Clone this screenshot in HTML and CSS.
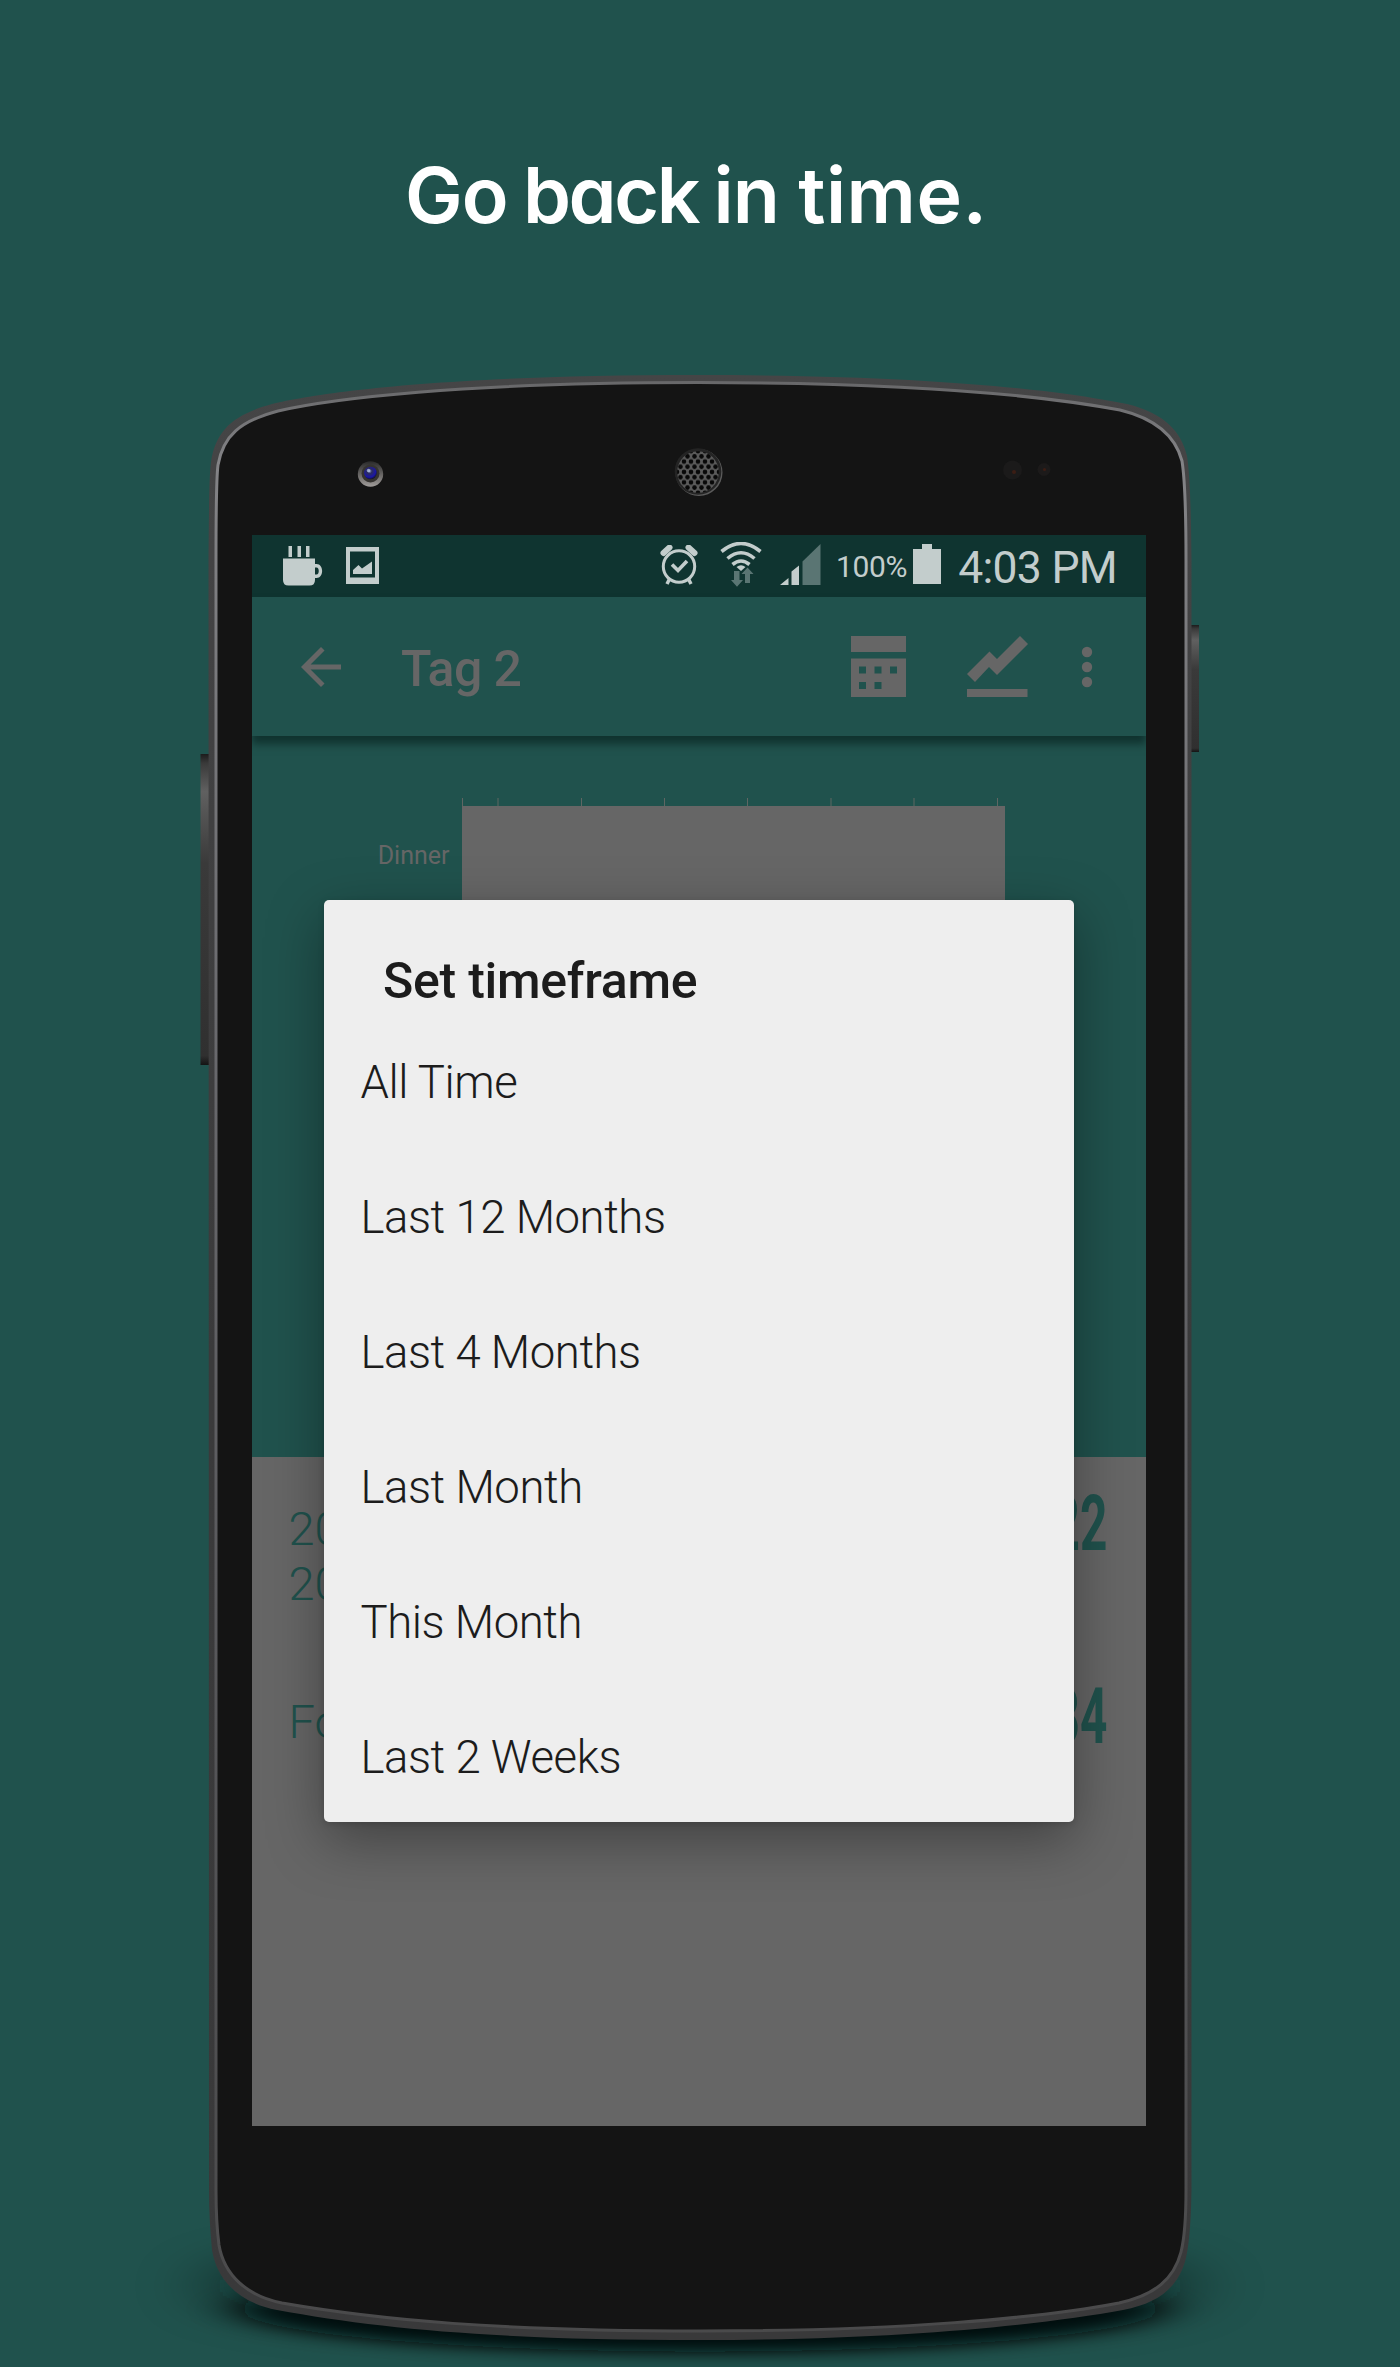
FILE: index.html
```html
<!DOCTYPE html>
<html lang="en">
<head>
<meta charset="utf-8">
<title>Go back in time.</title>
<link rel="stylesheet" href="styles.css">
</head>
<body>
<main class="promo">
  <h1 class="headline"><span>Go</span> <span class="tight">back</span> <span>in</span> <span class="wide">time.</span></h1>
  <div class="phone">
    <svg class="shell" width="1400" height="2027" viewBox="0 340 1400 2027" aria-hidden="true">
      <defs>
        <filter id="soft" x="-20%" y="-60%" width="140%" height="220%"><feGaussianBlur stdDeviation="26 8"/></filter>
        <filter id="softer" x="-20%" y="-60%" width="140%" height="220%"><feGaussianBlur stdDeviation="34 20"/></filter>
        <linearGradient id="rim" x1="0" y1="0" x2="0" y2="1"><stop offset="0" stop-color="#454546"/><stop offset=".5" stop-color="#3a3a3b"/><stop offset="1" stop-color="#39393a"/></linearGradient>
        <linearGradient id="edge" x1="0" y1="0" x2="0" y2="1"><stop offset="0" stop-color="#68686a"/><stop offset=".04" stop-color="#838386"/><stop offset=".35" stop-color="#68686c"/><stop offset=".7" stop-color="#555558"/><stop offset="1" stop-color="#4a4a4b"/></linearGradient>
        <linearGradient id="key" x1="0" y1="0" x2="0" y2="1"><stop offset="0" stop-color="#1c1c1c"/><stop offset=".03" stop-color="#3a3a3a"/><stop offset=".12" stop-color="#606060"/><stop offset=".35" stop-color="#3a3a3a"/><stop offset=".97" stop-color="#303030"/><stop offset="1" stop-color="#141414"/></linearGradient>
        <linearGradient id="ring" x1="0" y1="0" x2="0" y2="1"><stop offset="0" stop-color="#2a2a2a"/><stop offset="1" stop-color="#a09c9a"/></linearGradient>
        <radialGradient id="lens" cx=".42" cy=".35" r=".65"><stop offset="0" stop-color="#8fa0d0"/><stop offset=".3" stop-color="#2c2c60"/><stop offset=".75" stop-color="#1a16a8"/><stop offset="1" stop-color="#15152c"/></radialGradient>
        <pattern id="mesh" x="698" y="472" width="7" height="10.4" patternUnits="userSpaceOnUse"><rect width="7" height="10.400" fill="#5a5a5a"/><g fill="#080808"><circle cx="0" cy="0" r="2.300"/><circle cx="7" cy="0" r="2.300"/><circle cx="3.500" cy="5.200" r="2.300"/><circle cx="0" cy="10.400" r="2.300"/><circle cx="7" cy="10.400" r="2.300"/></g></pattern>
      </defs>
      <ellipse cx="700" cy="2286" rx="500" ry="48" fill="#04110f" opacity=".5" filter="url(#softer)"/>
      <ellipse cx="700" cy="2309" rx="460" ry="43" fill="#010707" filter="url(#soft)"/>
      <rect x="200.500" y="754" width="12" height="311" fill="url(#key)"/>
      <rect x="1188" y="625" width="11" height="127" fill="url(#key)"/>
      <path fill="url(#rim)" d="M208.500 560C209 510 209 478 211 462C216 428 236 414 272 404C318 393 440 375 698 375C940 375 1060 391 1127 404C1165 413 1182 433 1187 456C1190 475 1191 510 1191.500 560V2190C1191 2215 1190 2240 1186 2258C1179 2286 1160 2303 1123 2310C1040 2325 900 2340 700 2340C500 2340 380 2329 277 2310C240 2303 217 2281 212 2250C210 2230 209 2210 209 2190Z"/>
      <path fill="#141414" stroke="url(#edge)" stroke-width="3" d="M216 560C216 510 216 480 218 465C223 436 240 421 278 411C330 399 460 382.500 698 382.500C940 382.500 1055 398 1120 410C1157 419 1176 438 1182 461C1185 480 1186 510 1186 560V2190C1186 2215 1185 2236 1181 2252C1174 2279 1155 2295 1119 2303C1040 2318 900 2331 700 2331C500 2331 380 2320 282 2303C247 2296 224 2275 219 2245C217 2230 216 2210 216 2190Z"/>
      <circle cx="370.500" cy="474" r="12.700" fill="url(#ring)"/><circle cx="370.500" cy="473.500" r="9" fill="#353330"/><circle cx="370.500" cy="473" r="6.300" fill="url(#lens)"/><circle cx="368.500" cy="470.500" r="1.700" fill="#bac9ea" opacity=".7"/>
      <circle cx="699" cy="472.500" r="23.500" fill="#5b5b5b"/><circle cx="698" cy="471.500" r="23.300" fill="#242424"/><circle cx="698" cy="472" r="20.800" fill="url(#mesh)"/>
      <circle cx="1012.500" cy="470" r="9.500" fill="#1b1a1a"/><circle cx="1014" cy="472" r="2" fill="#3b1d14"/>
      <circle cx="1044" cy="469.500" r="6.500" fill="#1c1a1a"/><circle cx="1044.500" cy="469.500" r="1.600" fill="#3b1d14"/>
    </svg>
    <section class="screen">
      <header class="statusbar">
        <svg class="i-cup" width="40" height="40" viewBox="0 0 40 40" fill="currentColor"><path d="M5.500 0h3.500v11H5.500zM14.500 0H18v11h-3.500zM23 0h3.500v11H23z"/><path fill-rule="evenodd" d="M0 12.500h32V18h1.500c7.500 0 7.500 14 0 14H32v2q0 5.500-5.500 5.500h-21Q0 39.500 0 34zM32 21.500v7h1.500c3 0 3-7 0-7z"/></svg>
        <svg class="i-pic" width="33" height="37" viewBox="0 0 33 37" fill="currentColor"><path fill-rule="evenodd" d="M0 0h33v37H0zM4 4.500v26h25v-26z"/><path d="M7 27v-4l5.500-5 3.500 3.500L26 14.500V27z"/></svg>
        <svg class="i-alarm" width="38" height="40" viewBox="0 0 38 40" fill="none" stroke="currentColor"><circle cx="19" cy="21.500" r="15.700" stroke-width="3"/><path d="M12 19.500l6 6 9-9.500" stroke-width="3.600"/><path d="M3.500 8l6-5.500M34.500 8l-6-5.500" stroke-width="6" stroke-linecap="round"/><path d="M9.500 34l-2.500 5M28.500 34l2.500 5" stroke-width="3.500"/></svg>
        <svg class="i-wifi" width="42" height="45" viewBox="0 0 42 45" fill="none"><path d="M1.500 9.500Q21-6.500 40.500 9.500M7.500 16.500Q21 5 34.500 16.500M12.500 22.500Q21 15.500 29.500 22.500" stroke="currentColor" stroke-width="3.600"/><path d="M16.500 25q4.500-3.500 9 0L21 29z" fill="currentColor"/><path class="dim" d="M14 29h5.500v9h3.500l-6 6.800-6-6.800h3zM25 41v-9h-3.500l6-6.500 6 6.500h-3.500v9z"/></svg>
        <svg class="i-signal" width="41" height="41" viewBox="0 0 41 41" fill="currentColor"><path d="M0 41l8.500-7v7zM11.500 41V27.500l7.500-6V41z"/><path class="dim" d="M22.500 41V17.500L40.500 0V41z"/></svg>
        <span class="percent">100%</span>
        <svg class="i-batt" width="28" height="40" viewBox="0 0 28 40" fill="currentColor"><path d="M9 0h10v5h9v35H0V5h9z"/></svg>
        <span class="clock">4:03 PM</span>
      </header>
      <nav class="toolbar">
        <svg class="i-back" width="40" height="40" viewBox="4 4 16 16" fill="currentColor"><path d="M20 11H7.830l5.590-5.590L12 4l-8 8 8 8 1.410-1.410L7.830 13H20v-2z"/></svg>
        <span class="screen-title">Tag 2</span>
        <svg class="i-cal" width="55" height="61" viewBox="0 0 55 61" fill="currentColor"><path fill-rule="evenodd" d="M0 0h55v16H0zM0 22.500h55V61H0zM8 30.500v7h7v-7zM23.500 30.500v7h7v-7zM39 30.500v7h7v-7zM8 46v7h7v-7zM23.500 46v7h7v-7z"/></svg>
        <svg class="i-line" width="61" height="61" viewBox="0 0 61 61" fill="currentColor"><path d="M0 38L22.500 15.500 30 23 53 0l8 8-31 31-8-8L8 46zM0 53h60.500v8H0z"/></svg>
        <svg class="i-more" width="12" height="42" viewBox="0 0 12 42" fill="currentColor"><circle cx="6" cy="6" r="5.200"/><circle cx="6" cy="21" r="5.200"/><circle cx="6" cy="36" r="5.200"/></svg>
      </nav>
      <section class="chart">
        <span class="meal">Dinner</span>
        <div class="plot">
          <svg width="543" height="8" viewBox="0 0 543 8" stroke="#5f6663" stroke-width="1"><path d="M.5 0v8M36 0v8M119.500 0v8M202.500 0v8M285.500 0v8M369 0v8M452 0v8M535.500 0v8"/></svg>
          <div class="grid"></div>
        </div>
      </section>
      <section class="stats">
        <div class="stat"><p>20<br>20</p><b>22</b></div>
        <div class="stat"><p>Fo</p><b>34</b></div>
      </section>
      <div class="dialog" role="dialog">
        <h2>Set timeframe</h2>
        <ul>
          <li>All Time</li>
          <li>Last 12 Months</li>
          <li>Last 4 Months</li>
          <li>Last Month</li>
          <li>This Month</li>
          <li>Last 2 Weeks</li>
        </ul>
      </div>
    </section>
  </div>
</main>
</body>
</html>
```
FILE: styles.css
```css
* { box-sizing: border-box; margin: 0; padding: 0; }
body { background: #20524d; font-family: Roboto, "Liberation Sans", sans-serif; }
svg { display: block; flex: none; }
.promo { width: 1400px; height: 2367px; overflow: hidden; display: flex; flex-direction: column; }
.headline { height: 340px; padding: 145px 0 0 405px; color: #fff; font: 600 77px/100px Inter, Lato, sans-serif; font-feature-settings: "cv11"; letter-spacing: -1px; word-spacing: -3px; white-space: nowrap; }
.tight { letter-spacing: -2.400px; }
.wide { padding-left: 4px; letter-spacing: .5px; }
.phone { position: relative; height: 2027px; padding: 195px 254px 0 252px; }
.shell { position: absolute; left: 0; top: 0; }
.screen { position: relative; width: 894px; height: 1591px; overflow: hidden; background: #666; display: flex; flex-direction: column; }

.statusbar { height: 62px; background: #0f3430; color: #c3cdcc; display: flex; align-items: flex-start; padding: 0 29px 0 31px; white-space: nowrap; }
.dim { fill: #5a7573; }
.i-cup { margin-top: 11px; }
.i-pic { margin: 12px 0 0 23px; }
.i-alarm { margin: 10px 0 0 281px; }
.i-wifi { margin: 7px 0 0 22px; }
.i-signal { margin: 9px 0 0 18px; }
.percent { width: 74px; margin: 9px 0 0 15px; font-size: 30px; line-height: 45px; letter-spacing: -.4px; }
.i-batt { margin: 9px 0 0 5px; }
.clock { margin: 3px 0 0 17px; font-size: 44.500px; line-height: 60px; letter-spacing: -.7px; }

.toolbar { position: relative; z-index: 1; height: 139px; background: #20524d; color: #666; display: flex; align-items: center; padding-left: 49px; box-shadow: 0 8px 8px rgba(0, 20, 18, .5); }
.screen-title { width: 451px; margin-left: 60px; padding-top: 4px; font-size: 50px; font-weight: 500; line-height: 66px; letter-spacing: -.6px; }
.i-cal { margin-left: -1px; }
.i-line { margin-left: 61px; }
.i-more { margin-left: 53px; }

.chart { height: 721px; background: #20524d; color: #666; display: flex; padding-top: 62px; }
.meal { width: 197.500px; margin: 41px 12.500px 0 0; text-align: right; font-size: 25px; line-height: 34px; }
.plot { width: 542.500px; }
.grid { height: 500px; background: #666; }

.stats { color: #20524d; padding: 44px 39px 0 36.500px; display: flex; flex-direction: column; gap: 83px; }
.stat { display: flex; justify-content: space-between; height: 110px; }
.stat p { font-size: 47px; font-weight: 300; line-height: 55px; }
.stat b { padding-top: 1px; font-size: 77px; line-height: 44px; transform: scaleX(.62); transform-origin: right; }

.dialog { position: absolute; left: 71.500px; top: 365px; width: 750.500px; height: 922px; background: #eee; border-radius: 5px; box-shadow: 0 18px 56px rgba(0, 0, 0, .36), 0 2px 6px rgba(0, 0, 0, .15); color: #1c1c1c; overflow: hidden; }
.dialog h2 { padding: 48px 0 0 59.500px; font-size: 50px; font-weight: 500; line-height: 66px; letter-spacing: -.25px; white-space: nowrap; }
.dialog ul { list-style: none; padding-top: 1px; }
.dialog li { padding-left: 37px; font-size: 45.500px; font-weight: 300; line-height: 135px; height: 135px; letter-spacing: -.45px; }
```
